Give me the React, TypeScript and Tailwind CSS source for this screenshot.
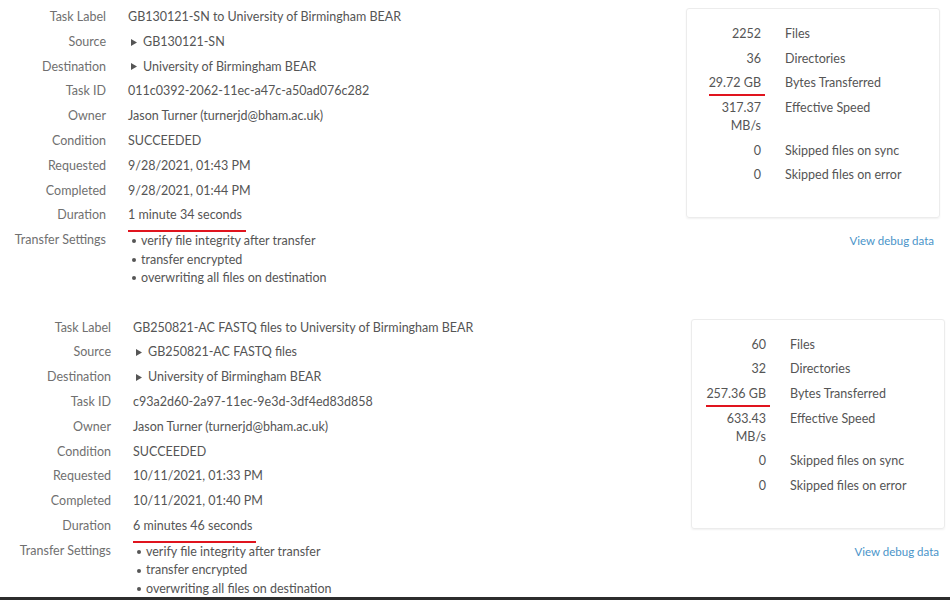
import React from 'react';

type Task = {
    label: string;
    source: string;
    destination: string;
    id: string;
    owner: string;
    condition: string;
    requested: string;
    completed: string;
    duration: string;
    stats: { files: string; dirs: string; bytes: string; speed: string; skipSync: string; skipErr: string };
};

const tasks: Task[] = [
    {
        label: 'GB130121-SN to University of Birmingham BEAR',
        source: 'GB130121-SN',
        destination: 'University of Birmingham BEAR',
        id: '011c0392-2062-11ec-a47c-a50ad076c282',
        owner: 'Jason Turner (turnerjd@bham.ac.uk)',
        condition: 'SUCCEEDED',
        requested: '9/28/2021, 01:43 PM',
        completed: '9/28/2021, 01:44 PM',
        duration: '1 minute 34 seconds',
        stats: { files: '2252', dirs: '36', bytes: '29.72 GB', speed: '317.37', skipSync: '0', skipErr: '0' },
    },
    {
        label: 'GB250821-AC FASTQ files to University of Birmingham BEAR',
        source: 'GB250821-AC FASTQ files',
        destination: 'University of Birmingham BEAR',
        id: 'c93a2d60-2a97-11ec-9e3d-3df4ed83d858',
        owner: 'Jason Turner (turnerjd@bham.ac.uk)',
        condition: 'SUCCEEDED',
        requested: '10/11/2021, 01:33 PM',
        completed: '10/11/2021, 01:40 PM',
        duration: '6 minutes 46 seconds',
        stats: { files: '60', dirs: '32', bytes: '257.36 GB', speed: '633.43', skipSync: '0', skipErr: '0' },
    },
];

// red annotation line under a value
const Marked: React.FC<{ children: React.ReactNode }> = ({ children }) => (
    <span className="relative inline-block">
        {children}
        <span className="absolute left-0 -right-[4px] -bottom-[4px] h-[2px] bg-[#e0141e]"></span>
    </span>
);

const Arrow = () => (
    <svg width="6" height="7" viewBox="0 0 6 7" className="inline-block mr-[6px] mb-[1px]">
        <path d="M0 0 L6 3.5 L0 7 Z" fill="#555" />
    </svg>
);

const Row: React.FC<{ label: string; children: React.ReactNode }> = ({ label, children }) => (
    <>
        <div className="text-right text-[#707070]">{label}</div>
        <div>{children}</div>
    </>
);

const TaskBlock: React.FC<{ task: Task }> = ({ task }) => {
    const s = task.stats;
    return (
        <div className="flex">
            {/* details */}
            <div className="w-[686px] shrink-0">
                <div className="grid grid-cols-[106px_1fr] gap-x-[22px] leading-[24.8px] text-[#555]">
                    <Row label="Task Label">{task.label}</Row>
                    <Row label="Source"><span className="pl-[3px]"><Arrow />{task.source}</span></Row>
                    <Row label="Destination"><span className="pl-[3px]"><Arrow />{task.destination}</span></Row>
                    <Row label="Task ID">{task.id}</Row>
                    <Row label="Owner">{task.owner}</Row>
                    <Row label="Condition">{task.condition}</Row>
                    <Row label="Requested">{task.requested}</Row>
                    <Row label="Completed">{task.completed}</Row>
                    <Row label="Duration"><Marked>{task.duration}</Marked></Row>
                    <div className="text-right text-[#707070] leading-[18.5px] pt-[3px]">Transfer Settings</div>
                    <ul className="leading-[18.5px] pt-[4px]">
                        {['verify file integrity after transfer', 'transfer encrypted', 'overwriting all files on destination'].map(t => (
                            <li key={t} className="flex items-center">
                                <span className="w-[4px] h-[4px] rounded-full bg-[#555] ml-[4px] mr-[5px]"></span>
                                {t}
                            </li>
                        ))}
                    </ul>
                </div>
            </div>

            {/* stats */}
            <div className="w-[254px] shrink-0 pt-[3px]">
                <div className="border border-[#ececec] rounded-[3px] shadow-[0_1px_2px_rgba(0,0,0,0.06)] pt-[16px] h-[210px]">
                    <div className="grid grid-cols-[74px_1fr] gap-x-[24px] gap-y-[6.7px] leading-[18px] text-[#555]">
                        <div className="text-right">{s.files}</div><div>Files</div>
                        <div className="text-right">{s.dirs}</div><div>Directories</div>
                        <div className="text-right whitespace-nowrap"><Marked>{s.bytes}</Marked></div><div>Bytes Transferred</div>
                        <div className="text-right">{s.speed}<br />MB/s</div><div>Effective Speed</div>
                        <div className="text-right">{s.skipSync}</div><div>Skipped files on sync</div>
                        <div className="text-right">{s.skipErr}</div><div>Skipped files on error</div>
                    </div>
                </div>
                <div className="text-right pr-[6px] mt-[14px] text-[11.5px] text-[#4a94c9]">View debug data</div>
            </div>
        </div>
    );
};

export default function App() {
    return (
        <div className="w-[950px] h-[600px] flex flex-col bg-white overflow-hidden text-[12.5px]" style={{ fontFamily: 'Lato, "Open Sans", sans-serif' }}>
            <div className="flex-1 overflow-hidden pt-[5px]">
                <TaskBlock task={tasks[0]} />
                <div className="pl-[5px] mt-[28px]">
                    <TaskBlock task={tasks[1]} />
                </div>
            </div>
            <div className="h-[3px] bg-[#2d2d2d]"></div>
        </div>
    );
}
